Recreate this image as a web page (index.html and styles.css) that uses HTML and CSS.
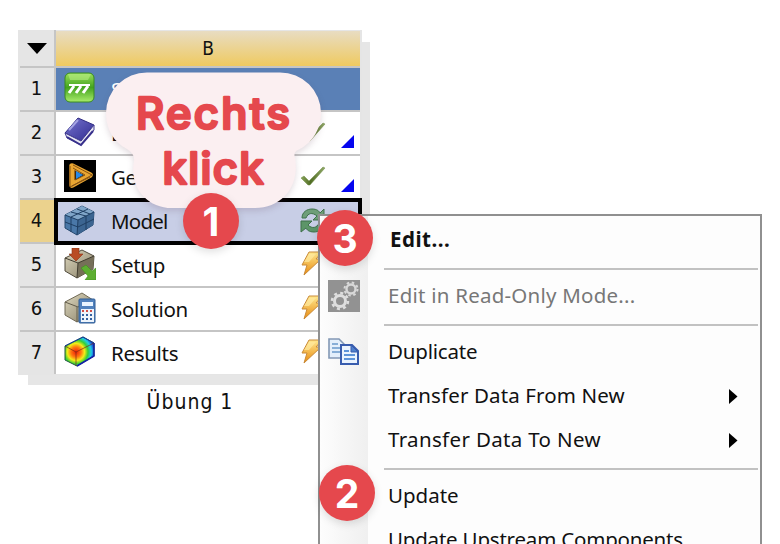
FILE: index.html
```html
<!DOCTYPE html>
<html lang="de">
<head>
<meta charset="utf-8">
<title>Übung 1</title>
<link rel="stylesheet" href="styles.css">
</head>
<body>
<svg class="defs" aria-hidden="true">
  <defs>
    <linearGradient id="gold" x2="0" y2="1"><stop stop-color="#ffe98f"/><stop offset="1" stop-color="#e88a10"/></linearGradient>
    <linearGradient id="green" x2="0" y2="1"><stop stop-color="#9ae05c"/><stop offset=".5" stop-color="#43a31d"/><stop offset="1" stop-color="#a9ec6c"/></linearGradient>
    <linearGradient id="stone" x2="1" y2="1"><stop stop-color="#ded8bf"/><stop offset="1" stop-color="#857d64"/></linearGradient>
    <linearGradient id="book" x2="1" y2="1"><stop stop-color="#7775cf"/><stop offset="1" stop-color="#302b91"/></linearGradient>
    <linearGradient id="tick" x2="1" y2="0"><stop stop-color="#8aa55c"/><stop offset=".4" stop-color="#516d24"/><stop offset="1" stop-color="#91aa68"/></linearGradient>
    <radialGradient id="heat" gradientUnits="userSpaceOnUse" cx="12" cy="16" r="19"><stop stop-color="#f01c08"/><stop offset=".27" stop-color="#ff7a10"/><stop offset=".45" stop-color="#f3ec19"/><stop offset=".63" stop-color="#35cf35"/><stop offset=".8" stop-color="#20cbe8"/><stop offset="1" stop-color="#1428d0"/></radialGradient>
    <symbol id="bolt" viewBox="0 0 22 25"><path d="M8 1H21L15 8H20L3 24L6 14H1Z" fill="url(#gold)" stroke="#c98a38" stroke-width="1"/><path d="M8 3H15L8 11H3" fill="#ffe9a0" opacity=".7"/></symbol>
    <symbol id="check" viewBox="0 0 26 22"><path d="M1 13L4 11L9 16L23 2L25 3L10 20H8Z" fill="url(#tick)" stroke="#6f8b47" stroke-width=".5"/></symbol>
    <symbol id="corner" viewBox="0 0 13 13"><path d="M13 0V13H0Z" fill="#0505ef"/></symbol>
  </defs>
</svg>

<main class="stage">
  <section class="system">
    <div class="grid">
      <div class="num head"><svg width="20" height="11"><path d="M0 0H20L10 11Z"/></svg></div>
      <div class="title">B</div>

      <div class="num">1</div>
      <div class="cell blue"><svg class="icon" viewBox="0 0 32 32"><rect x="1" y="1" width="29" height="29" rx="5" fill="url(#green)" stroke="#398b20"/><path d="M4 2H27L24 8H6Z" fill="#b8ec83" opacity=".6"/><path d="M5 13H26" stroke="#fff" stroke-width="2"/><path d="M10 14L5 21M17 14L12 21M24 14L19 21" stroke="#fff" stroke-width="3"/></svg><span class="name">S</span></div>

      <div class="num">2</div>
      <div class="cell"><svg class="icon" viewBox="0 0 32 32"><path d="M14 2L30 9L17 25L1 17Z" fill="url(#book)" stroke="#302b83"/><path d="M1 17L17 25L30 9V14L17 29L3 22Z" fill="#e8e8f3" stroke="#403b91"/><path d="M3 21L17 29L29 15" stroke="#38308c" stroke-width="2" fill="none"/><path d="M5 14L14 4" stroke="#a5a4e4" stroke-width="2"/></svg><span class="name">E</span><svg class="state"><use href="#check"/></svg><svg class="corner"><use href="#corner"/></svg></div>

      <div class="num">3</div>
      <div class="cell"><svg class="icon" viewBox="0 0 32 32"><path d="M0 0H32V32H0Z"/><path d="M8 6L26 15L8 25Z" fill="none" stroke="#e9a632" stroke-width="5.500" stroke-linejoin="round"/><path d="M9 5L28 15L8 26M6 6V27L26 17M11 10V20L21 15L9 8" fill="none" stroke="#865315" stroke-width="1"/><path d="M12 11L19 15L12 19Z" fill="#2789e8"/></svg><span class="name">Ge</span><svg class="state"><use href="#check"/></svg><svg class="corner"><use href="#corner"/></svg></div>

      <div class="num current">4</div>
      <div class="cell selected"><svg class="icon" viewBox="0 0 32 32"><path d="M1 10L18 1L30 7L29 20L13 30L1 23Z" fill="#4a78a8" stroke="#27496f"/><path d="M1 10L18 1L30 7L14 15Z" fill="#7fa5c8"/><path d="M14 15L30 7L29 20L13 30Z" fill="#3c6591"/><path d="M1 10L14 15L30 7M14 15L13 30M7 12V27M22 11V25M1 17L14 22L30 14M7 7L22 11M13 4L26 9M7 12L24 4" fill="none" stroke="#1f3f63"/></svg><span class="name">Model</span><svg class="state refresh" viewBox="0 0 26 26"><path d="M2 10C2 4 7 1 12 1C17 1 19 3 20 5L24 1V12H13L17 8C12 4 8 5 6 10Z" fill="#6e9e78" stroke="#3e714a"/><path d="M24 15C23 21 19 24 14 24C9 24 7 22 6 20L1 24V13H12L8 17C12 21 17 20 19 15Z" fill="#5c9568" stroke="#3e714a"/></svg></div>

      <div class="num">5</div>
      <div class="cell"><svg class="icon" viewBox="0 0 32 32"><path d="M1 10L18 2L30 8L29 21L13 30L1 23Z" fill="url(#stone)" stroke="#514b3c"/><path d="M14 15L30 8L29 21L13 30Z" fill="#766f59"/><path d="M1 10L14 15L30 8M14 15L13 30" fill="none" stroke="#413c30"/><path d="M8 0H15V6H19L12 13L5 6H8Z" fill="#b94c25" stroke="#8b3215" stroke-width=".6"/><path d="M17 20L22 17L28 23L32 20V32H21L24 28Z" fill="#5dae31" stroke="#3f8b1e" stroke-width=".6"/></svg><span class="name">Setup</span><svg class="bolt"><use href="#bolt"/></svg></div>

      <div class="num">6</div>
      <div class="cell"><svg class="icon" viewBox="0 0 32 32"><path d="M1 10L18 1L29 8V21L13 30L1 23Z" fill="url(#stone)" stroke="#716a56"/><path d="M1 10L14 15L29 8M13 15V30" fill="none" stroke="#625c4b"/><rect x="15" y="7" width="16" height="24" rx="1" fill="#5182be" stroke="#315c94"/><path d="M18 10H29V14H18Z" fill="#e9f4ff"/><path d="M17 17H30V30H17Z" fill="#edf4fc"/><path d="M18 19H29" stroke="#d04e48" stroke-width="2" stroke-dasharray="2 2"/><path d="M18 23H29M18 27H29" stroke="#3260a0" stroke-width="2" stroke-dasharray="2 2"/></svg><span class="name">Solution</span><svg class="bolt"><use href="#bolt"/></svg></div>

      <div class="num">7</div>
      <div class="cell"><svg class="icon" viewBox="0 0 32 32"><path d="M1 10L19 1L30 7V20L13 30L1 24Z" fill="url(#heat)" stroke="#20563b"/><path d="M30 7V20L13 30" stroke="#1520a8" stroke-width="1.5" fill="none"/><path d="M1 10L12 16L30 7M12 16V30" fill="none" stroke="#782b15" stroke-opacity=".7"/><path d="M1 10L19 1L30 7" fill="none" stroke="#183da0"/></svg><span class="name">Results</span><svg class="bolt"><use href="#bolt"/></svg></div>
    </div>
    <div class="caption">Übung 1</div>
  </section>

  <nav class="menu">
    <div class="item strong"><span class="gutter"></span><span class="label edit">Edit...</span></div>
    <hr>
    <div class="item disabled"><span class="gutter"><svg width="32" height="32"><path d="M0 0H32V32H0Z" fill="#929292"/><circle cx="12" cy="21" r="5.5" fill="none" stroke="#dedede" stroke-width="3"/><circle cx="12" cy="21" r="8" fill="none" stroke="#dedede" stroke-width="2.5" stroke-dasharray="3 3.28"/><circle cx="23" cy="9" r="4.5" fill="none" stroke="#d8d8d8" stroke-width="2.4"/><circle cx="23" cy="9" r="6.5" fill="none" stroke="#d8d8d8" stroke-width="2" stroke-dasharray="2.5 2.6"/></svg></span><span class="label readonly">Edit in Read-Only Mode...</span></div>
    <hr>
    <div class="item"><span class="gutter"><svg width="32" height="28"><path d="M1 1H11L16 6V20H1Z" fill="#e4effb" stroke="#8298b5" stroke-width="1.6"/><path d="M4 6H10M4 10H13M4 14H12" stroke="#6899cc" stroke-width="1.7"/><path d="M13 7H24L30 13V26H13Z" fill="#eaf3fe" stroke="#385cae" stroke-width="2"/><path d="M23 7V14H30Z" fill="#4f80cc" stroke="#385cae"/><path d="M16 13H21M16 17H27M16 21H27" stroke="#5d93d9" stroke-width="1.8"/></svg></span><span class="label duplicate">Duplicate</span></div>
    <div class="item"><span class="gutter"></span><span class="label from">Transfer Data From New</span><svg class="arrow" width="9" height="15"><path d="M0 0L8.500 7.500L0 15Z"/></svg></div>
    <div class="item"><span class="gutter"></span><span class="label to">Transfer Data To New</span><svg class="arrow" width="9" height="15"><path d="M0 0L8.500 7.500L0 15Z"/></svg></div>
    <hr>
    <div class="item"><span class="gutter"></span><span class="label update">Update</span></div>
    <div class="item"><span class="gutter"></span><span class="label upstream">Update Upstream Components</span></div>
  </nav>

  <svg class="callout" viewBox="0 0 240 160">
    <path class="bubble" d="M47 12.500H180A41 40.500 0 0 1 221 53C221 70 211 84 198 90Q193 92 195 98C200 126 182 148 155 148H72C46 148 29 126 34 101Q35 94 27 89C14 82 6 70 6 53A41 40.500 0 0 1 47 12.500Z"/>
    <text x="36" y="68.500" textLength="154">Rechts</text>
    <text x="62.500" y="124" textLength="101">klick</text>
  </svg>
  <div class="badge one">1</div>
  <div class="badge two">2</div>
  <div class="badge three">3</div>
</main>
</body>
</html>
```
FILE: styles.css
```css
* { box-sizing: border-box; }

body {
  margin: 0;
  background: #fff;
  color: #111;
  font: 22px/1 "DejaVu Sans Condensed", "DejaVu Sans", sans-serif;
}

.defs { position: absolute; width: 0; height: 0; }
.stage { position: relative; width: 780px; height: 544px; overflow: hidden; }

.system { isolation: isolate; width: 344px; padding-top: 30px; margin-left: 18px; }
.grid {
  display: grid;
  grid-template-columns: 36px 304px;
  grid-template-rows: 36px repeat(7, 44px);
  width: 344px;
  height: 345px;
  padding: 0 2px;
  background: #e5e5e5;
  box-shadow: 9px 11px 0 -1px #e6e6e6;
}
.num {
  display: flex;
  align-items: center;
  justify-content: center;
  padding: 0 1px 3px 0;
  border-right: 2px solid #c5c5c5;
  border-top: 2px solid #c5c5c5;
  background: #e5e5e5;
  font: 20px/1 "DejaVu Sans Condensed", "DejaVu Sans", sans-serif;
}
.num.head { border-top: 0; padding: 1px 1px 0 0; }
.num.current { background: #ebd28d; }
.title {
  display: flex;
  align-items: center;
  justify-content: center;
  border-top: 1px solid #e5e5e5;
  background: linear-gradient(#e8dcc2, #efca60);
  font: 19px/1 "DejaVu Sans Condensed", "DejaVu Sans", sans-serif;
}
.cell {
  display: flex;
  align-items: center;
  gap: 15px;
  padding: 0 6px 3px 8px;
  border-top: 2px solid #c5c5c5;
  background: #fff;
}
.cell.blue { background: #5a80b6; }
.cell.blue .name { color: #fff; }
.cell.selected {
  position: relative;
  z-index: 1;
  width: 308px;
  height: 47px;
  margin: 0 -2px -3px;
  padding: 0 6px 2px;
  border: 4px solid #000;
  background: #c8cee6;
}
.icon { flex: none; width: 32px; height: 32px; }
.name {
  width: 174px;
  padding-top: 4px;
  white-space: nowrap;
  font-family: "Noto Sans", sans-serif;
  font-size: 20.5px;
  letter-spacing: -.3px;
}
.selected .name { padding-top: 2px; letter-spacing: -.8px; }
.state { width: 26px; height: 22px; flex: none; }
.state.refresh { height: 26px; }
.bolt { width: 22px; height: 25px; margin-left: 1px; flex: none; }
.corner { width: 13px; height: 13px; margin: 20px 0 0 0; flex: none; }
.caption {
  padding-top: 16px;
  text-align: center;
  font: 21px/22px "DejaVu Sans Condensed", "DejaVu Sans", sans-serif;
  letter-spacing: 1px;
}

.menu {
  position: absolute;
  top: 214px;
  left: 318px;
  width: 444px;
  height: 360px;
  padding-top: 2px;
  border: 2px solid #909090;
  background: linear-gradient(90deg, #fdfdfd, #f0f0f0 46px, #f0f0f0 48px, #fdfdfd 48px);
}
.item { display: flex; align-items: center; height: 44px; }
.gutter { display: flex; align-items: center; flex: 0 0 48px; padding-left: 8px; }
.label { flex: 1; padding: 0 0 2px 20px; white-space: nowrap; font: 20.5px/28px "Noto Sans", sans-serif; }
.strong .label { padding-left: 22px; font-weight: 700; letter-spacing: .5px; }
.disabled .label { color: #777; }
.readonly { letter-spacing: .23px; }
.duplicate { letter-spacing: -.2px; }
.from { letter-spacing: .13px; }
.to { letter-spacing: .34px; }
.upstream { letter-spacing: -.2px; }
.arrow { margin-right: 22px; }
.menu hr { height: 2px; margin: 6px 2px 4px 64px; border: 0; background: #c2c2c2; }

.callout { position: absolute; left: 100px; top: 60px; width: 240px; height: 160px; overflow: visible; }
.bubble { fill: #fbeff1; filter: drop-shadow(0 3px 3px rgb(80 40 60 / .16)); }
.callout text {
  fill: #e5484d;
  stroke: #e5484d;
  stroke-width: 2.6px;
  stroke-linejoin: round;
  font: 500 43.5px Inter, sans-serif;
}
.badge {
  position: absolute;
  display: flex;
  align-items: center;
  justify-content: center;
  width: 56px;
  height: 56px;
  border-radius: 50%;
  background: #e5484d;
  box-shadow: 0 3px 8px rgb(0 0 0 / .13);
  color: #fff;
  font: 700 39px/1 Inter, sans-serif;
}
.one { left: 183px; top: 193px; }
.two { left: 319px; top: 465px; }
.three { left: 317px; top: 210px; }
```
